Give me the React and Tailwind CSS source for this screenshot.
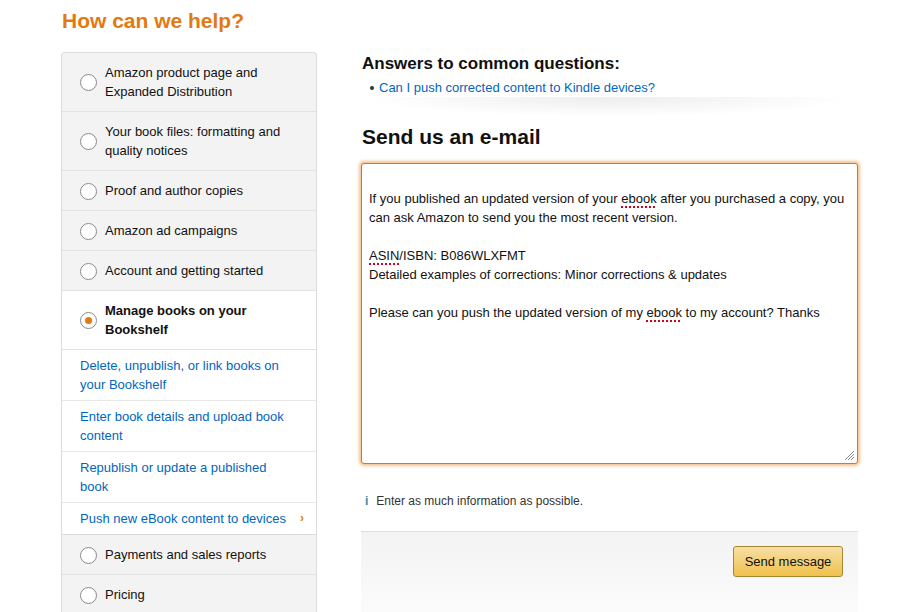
import React from 'react';

const topics = [
  { label: ['Amazon product page and', 'Expanded Distribution'] },
  { label: ['Your book files: formatting and', 'quality notices'] },
  { label: ['Proof and author copies'] },
  { label: ['Amazon ad campaigns'] },
  { label: ['Account and getting started'] },
];

const subTopics = [
  ['Delete, unpublish, or link books on', 'your Bookshelf'],
  ['Enter book details and upload book', 'content'],
  ['Republish or update a published', 'book'],
];

const Radio = ({ checked }) => (
  <span className="mt-[1px] flex h-[17px] w-[17px] shrink-0 items-center justify-center rounded-full border border-[#8a8a8a] bg-white">
    {checked && <span className="h-[7px] w-[7px] rounded-full bg-[#e47911]" />}
  </span>
);

const TopicRow = ({ lines, checked, white }) => (
  <div className={`flex items-center gap-[8px] border-b border-[#e3e3e3] py-[10px] pl-[18px] pr-[10px] ${white ? 'bg-white' : ''}`}>
    <Radio checked={checked} />
    <div className={`leading-[19px] ${checked ? 'font-bold text-[#111]' : 'text-[#111]'}`}>
      {lines.map((l) => (
        <div key={l}>{l}</div>
      ))}
    </div>
  </div>
);

const Misspelled = ({ children }) => (
  <span className="underline decoration-dotted decoration-[#d0021b] decoration-2 underline-offset-[3px]">{children}</span>
);

export default function App() {
  return (
    <div className="min-h-[612px] bg-white text-[13px] text-[#111]" style={{ fontFamily: '"Liberation Sans", Arial, sans-serif' }}>
      <div className="pl-[62px] pt-[8px]">
        <h1 className="text-[21px] font-bold leading-[26px] text-[#e47911]">How can we help?</h1>
      </div>

      <div className="mt-[18px] flex">
        {/* left topic list */}
        <div className="ml-[61px] w-[256px] shrink-0 overflow-hidden rounded-t-[4px] border border-b-0 border-[#dcdcdc] bg-[#f3f3f3]">
          {topics.map((t) => (
            <TopicRow key={t.label[0]} lines={t.label} />
          ))}
          <TopicRow lines={['Manage books on your', 'Bookshelf']} checked white />
          {subTopics.map((s) => (
            <div key={s[0]} className="border-b border-[#e8e8e8] bg-white py-[6px] pl-[18px] pr-[10px] leading-[19px] text-[#0066c0]">
              {s.map((l) => (
                <div key={l}>{l}</div>
              ))}
            </div>
          ))}
          <div className="flex items-center justify-between border-b border-[#dcdcdc] bg-white py-[6px] pl-[18px] pr-[12px] leading-[19px] text-[#0066c0]">
            <span>Push new eBook content to devices</span>
            <span className="text-[12px] font-bold text-[#e47911]">›</span>
          </div>
          <TopicRow lines={['Payments and sales reports']} />
          <TopicRow lines={['Pricing']} />
        </div>

        {/* right column */}
        <div className="ml-[44px] mt-[1px] w-[497px]">
          <h2 className="pl-[1px] text-[17px] font-bold leading-[22px]">Answers to common questions:</h2>
          <ul className="mt-[3px] pl-[9px] leading-[19px]">
            <li className="flex items-center gap-[5px]">
              <span className="h-[4px] w-[4px] rounded-full bg-[#333]" />
              <span className="text-[#0066c0]">Can I push corrected content to Kindle devices?</span>
            </li>
          </ul>
          <div className="h-[20px] bg-[radial-gradient(ellipse_at_top,rgba(0,0,0,0.07),rgba(0,0,0,0)_70%)]" />

          <h2 className="mt-[7px] pl-[1px] text-[21px] font-bold leading-[26px]">Send us an e-mail</h2>

          <div className="relative mt-[13px] h-[301px] rounded-[3px] border border-[#e77600] bg-white px-[7px] pt-[6px] leading-[19px] shadow-[0_0_3px_2px_rgba(228,121,17,0.45)]">
            <div className="h-[19px]" />
            <div>If you published an updated version of your <Misspelled>ebook</Misspelled> after you purchased a copy, you</div>
            <div>can ask Amazon to send you the most recent version.</div>
            <div className="h-[19px]" />
            <div><Misspelled>ASIN</Misspelled>/ISBN: B086WLXFMT</div>
            <div>Detailed examples of corrections: Minor corrections &amp; updates</div>
            <div className="h-[19px]" />
            <div>Please can you push the updated version of my <Misspelled>ebook</Misspelled> to my account? Thanks</div>
            <svg className="absolute bottom-[2px] right-[2px]" width="12" height="12" viewBox="0 0 12 12">
              <path d="M11 2 L2 11 M11 5 L5 11 M11 8 L8 11" stroke="#8a8a8a" strokeWidth="1" />
            </svg>
          </div>

          <div className="mt-[29px] flex items-center gap-[8px] pl-[4px] text-[12px] leading-[16px] text-[#333]">
            <span className="font-bold text-[#3d8aa0]">i</span>
            <span>Enter as much information as possible.</span>
          </div>

          <div className="mt-[22px] flex h-[81px] justify-end border-t border-[#dddddd] bg-[linear-gradient(to_bottom,#f3f3f3,#fbfbfb)] pr-[15px] pt-[14px]">
            <button className="h-[31px] w-[110px] rounded-[3px] border border-[#a88734] bg-[linear-gradient(to_bottom,#f7dfa5,#f0c14b)] text-[13px] text-[#111]">
              Send message
            </button>
          </div>
        </div>
      </div>
    </div>
  );
}
